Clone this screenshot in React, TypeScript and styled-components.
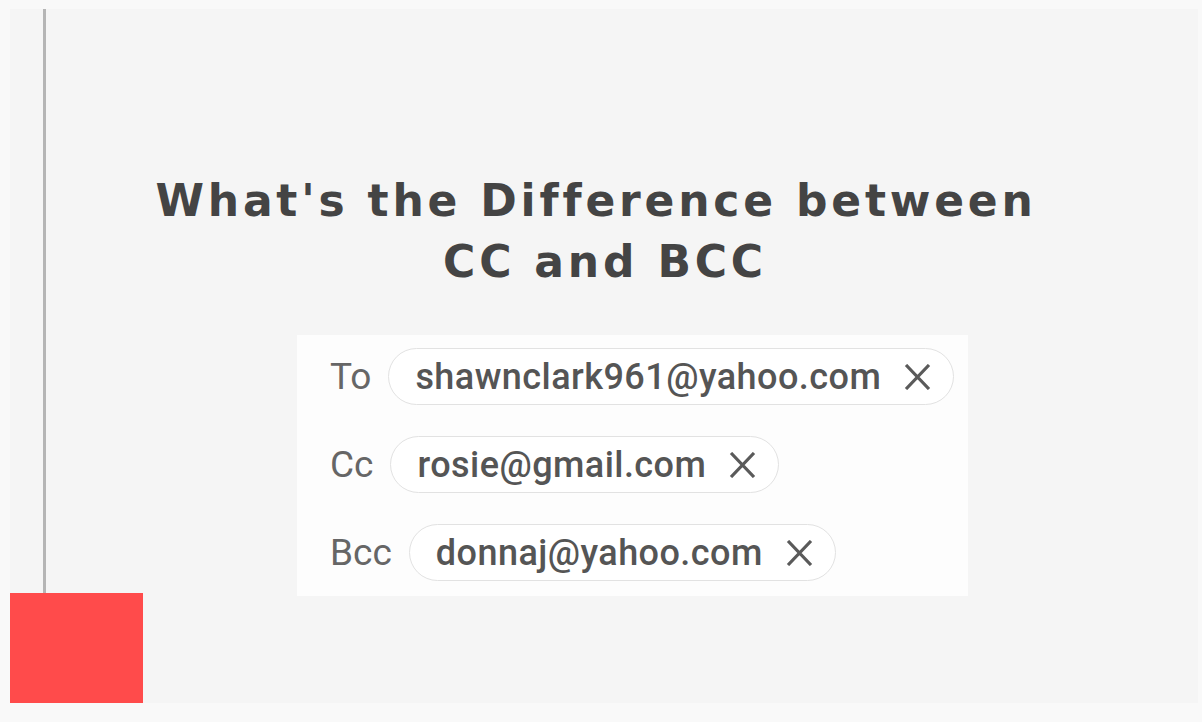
import React from 'react';
import styled, { createGlobalStyle } from 'styled-components';

const GlobalStyle = createGlobalStyle`
    html, body {
        margin: 0;
        padding: 0;
        background: #f9f9f9;
    }
`;

const Slide = styled.div`
    width: 1188px;
    height: 694px;
    margin: 9px 0 0 10px;
    background: #f5f5f5;
    display: flex;
`;

const SideColumn = styled.div`
    width: 133px;
    display: flex;
    flex-direction: column;
    .line {
        flex: 1;
        width: 3px;
        margin-left: 33px;
        background: #b5b5b5;
    }
    .square {
        height: 110px;
        background: #ff4b4b;
    }
`;

const Main = styled.div`
    flex: 1;
    display: flex;
    flex-direction: column;
`;

const Title = styled.h1`
    margin: 161px 0 0 3px;
    width: 900px;
    white-space: nowrap;
    text-align: center;
    font-family: 'DejaVu Sans', sans-serif;
    font-weight: 700;
    font-size: 44px;
    line-height: 61px;
    letter-spacing: 3.8px;
    color: #444444;
    .second {
        display: inline-block;
        margin-left: 18px;
    }
`;

const Card = styled.div`
    margin: 43px 0 0 154px;
    width: 671px;
    height: 261px;
    box-sizing: border-box;
    padding: 13px 0 0 33px;
    background: #fdfdfd;
    display: flex;
    flex-direction: column;
    gap: 31px;
`;

const Row = styled.div`
    display: flex;
    align-items: center;
    gap: 17px;
`;

const Label = styled.span`
    font-family: Roboto, 'Liberation Sans', sans-serif;
    font-size: 37px;
    color: #666666;
`;

const Chip = styled.div`
    height: 57px;
    box-sizing: border-box;
    border: 1.5px solid #e2e2e2;
    border-radius: 29px;
    padding: 0 22px 0 26px;
    display: flex;
    align-items: center;
    gap: 23px;
    background: #ffffff;
    span {
        font-family: Roboto, 'Liberation Sans', sans-serif;
        font-weight: 500;
        font-size: 36px;
        color: #555555;
        letter-spacing: 0.45px;
    }
`;

const Close = () => (
    <svg width="27" height="26" viewBox="0 0 27 26">
        <path d="M2 1 L25 25 M25 1 L2 25" stroke="#5a5a5a" strokeWidth="3.2" fill="none" />
    </svg>
);

const recipients = [
    { label: 'To', email: 'shawnclark961@yahoo.com' },
    { label: 'Cc', email: 'rosie@gmail.com' },
    { label: 'Bcc', email: 'donnaj@yahoo.com' },
];

const App = () => {
    return (
        <>
            <GlobalStyle />
            <Slide>
                <SideColumn>
                    <div className="line" />
                    <div className="square" />
                </SideColumn>
                <Main>
                    <Title>
                        What's the Difference between
                        <br />
                        <span className="second">CC and BCC</span>
                    </Title>
                    <Card>
                        {recipients.map((r) => (
                            <Row key={r.label}>
                                <Label>{r.label}</Label>
                                <Chip>
                                    <span>{r.email}</span>
                                    <Close />
                                </Chip>
                            </Row>
                        ))}
                    </Card>
                </Main>
            </Slide>
        </>
    );
};

export default App;
